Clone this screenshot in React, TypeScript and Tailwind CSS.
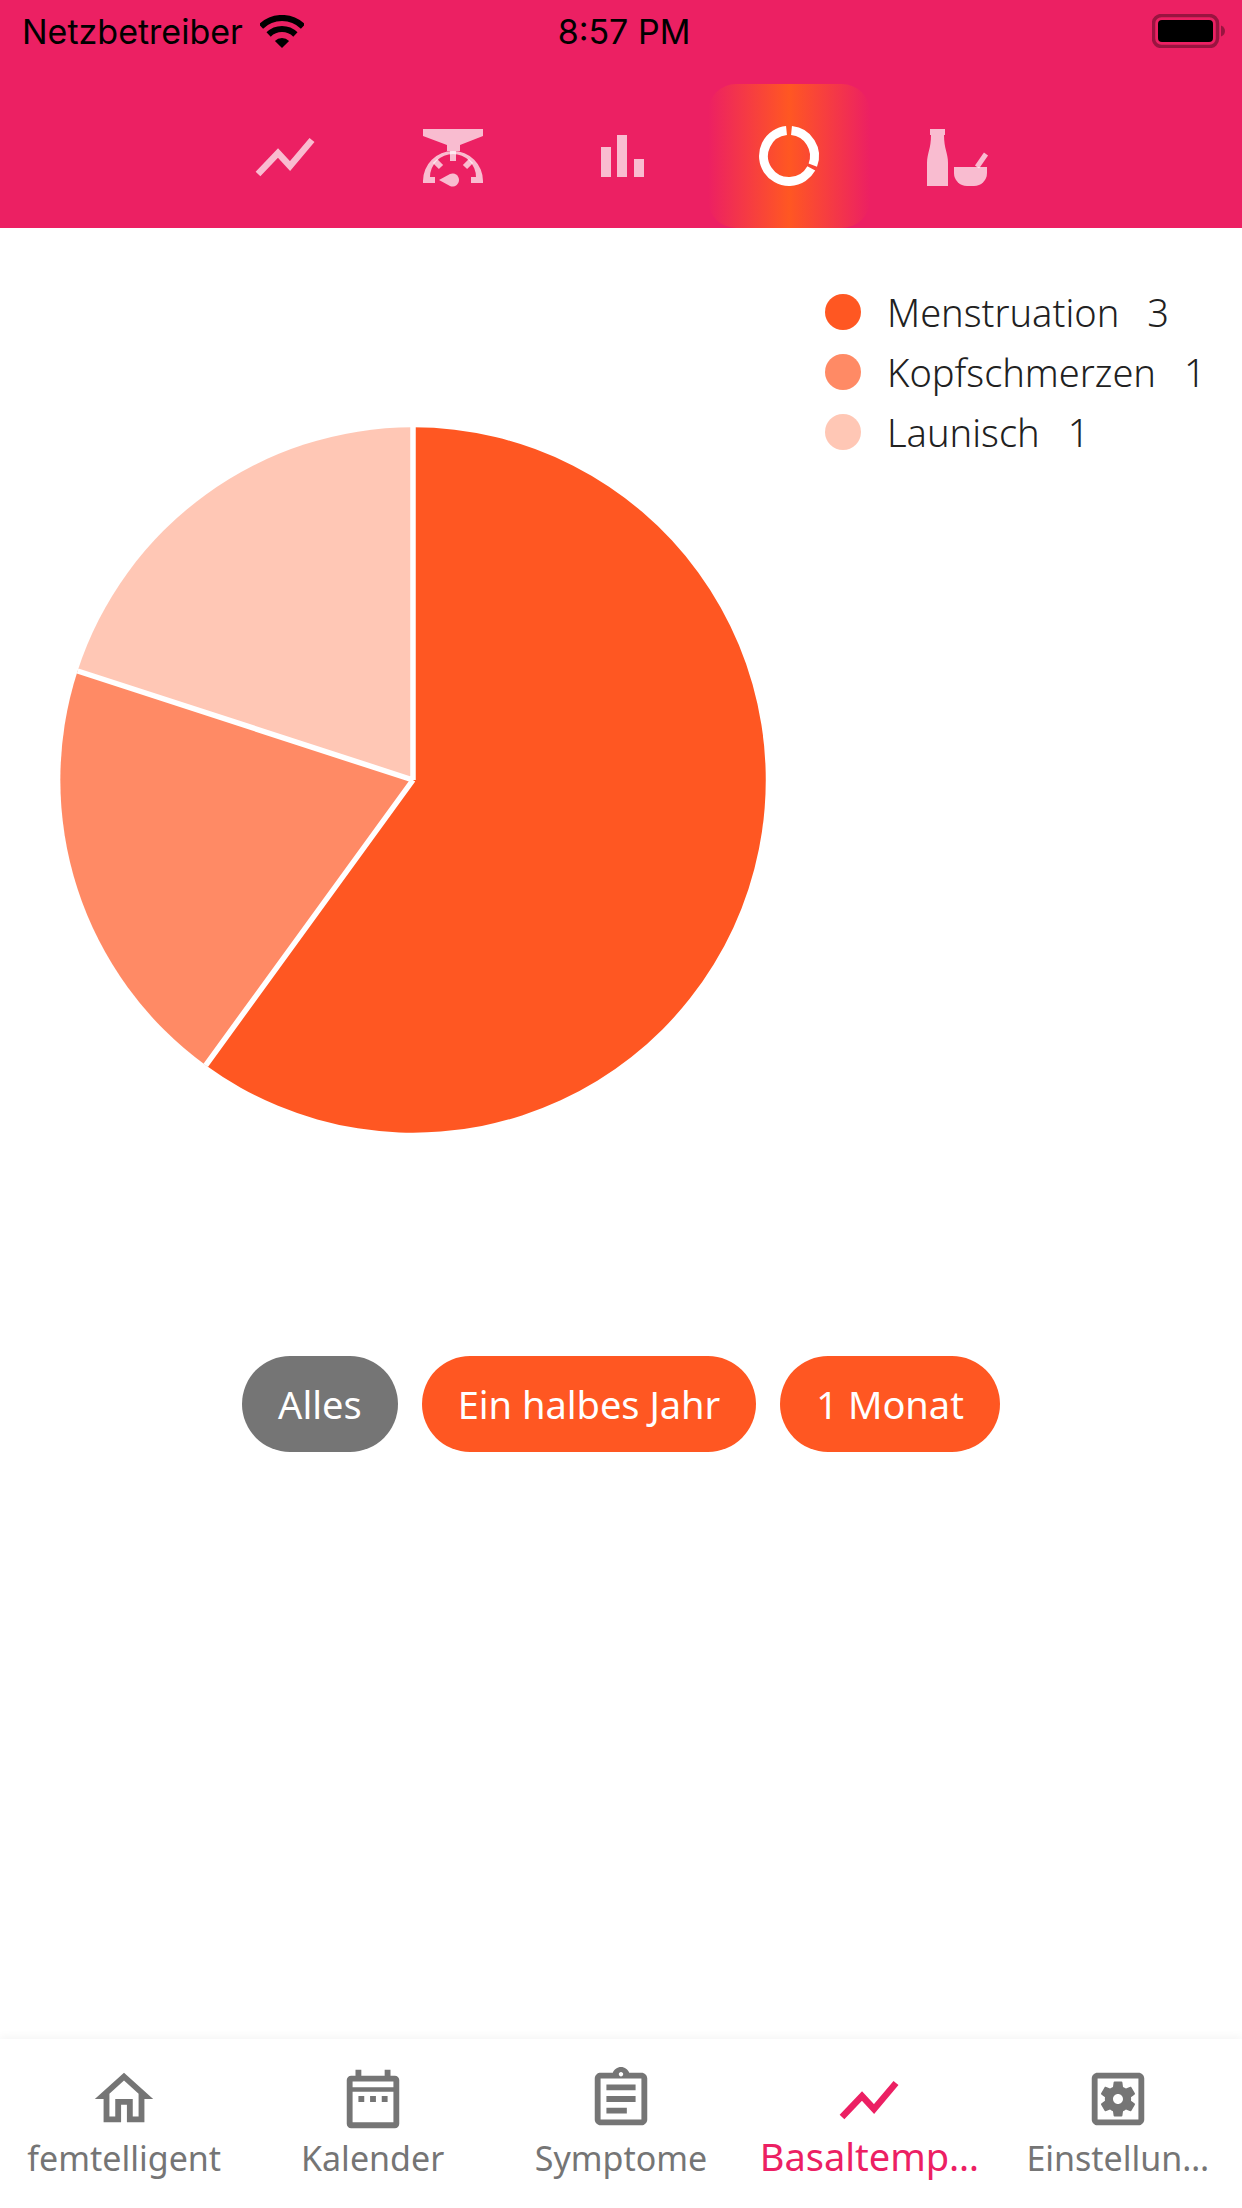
import React from "react";

const UI_FONT = "font-['Noto_Sans',sans-serif]";

const TrendIcon = ({ className }: { className?: string }) => (
  <svg viewBox="0 0 70 70" className={className} fill="none" stroke="currentColor" strokeWidth={6.5}>
    <polyline points="8,53 28,32 40,45 62,19" />
  </svg>
);

const ScaleIcon = ({ className }: { className?: string }) => (
  <svg viewBox="0 0 70 70" className={className} fill="currentColor">
    <path d="M5 8H65V15L42 24V30H29V24L5 15Z" />
    <path d="M5 62V60A30 30 0 0 1 65 60V62H53V56H58A23 23 0 0 0 12 56H17V62Z" />
    <rect x="32" y="30" width="6" height="10" />
    <path d="M17 40L23 46M53 40L47 46" stroke="currentColor" strokeWidth={6} />
    <path d="M21 59L32 53A6.5 6.5 0 1 1 32 65Z" />
  </svg>
);

const BarsIcon = ({ className }: { className?: string }) => (
  <svg viewBox="0 0 70 70" className={className} fill="currentColor">
    <rect x="15" y="26" width="10" height="30" />
    <rect x="31" y="14" width="10" height="42" />
    <rect x="48" y="38" width="10" height="18" />
  </svg>
);

const DonutIcon = ({ className }: { className?: string }) => (
  <svg viewBox="0 0 70 70" className={className} fill="none" stroke="currentColor" strokeWidth={9}>
    <path d="M37.5 9.6A25.5 25.5 0 0 1 58.8 44.1" />
    <path d="M57.3 47.4A25.5 25.5 0 1 1 32.5 9.6" />
  </svg>
);

const BottleIcon = ({ className }: { className?: string }) => (
  <svg viewBox="0 0 70 70" className={className} fill="currentColor">
    <rect x="8" y="8" width="15" height="6" />
    <path d="M9 14H22C22 28 26 32 26 42V65H5V42C5 32 9 28 9 14Z" />
    <path d="M32 46H65V52A13 13 0 0 1 52 65H45A13 13 0 0 1 32 52Z" />
    <path d="M55 46L64 33" stroke="currentColor" strokeWidth={5} />
  </svg>
);

const HomeIcon = () => (
  <svg viewBox="0 0 24 24" className="w-[70px] h-[70px]" fill="currentColor">
    <path d="M12 5.69l5 4.5V18h-2v-6H9v6H7v-7.81l5-4.5M12 3L2 12h3v8h6v-6h2v6h6v-8h3L12 3z" />
  </svg>
);

const CalendarIcon = () => (
  <svg viewBox="0 0 24 24" className="w-[70px] h-[70px]" fill="currentColor">
    <path
      fillRule="evenodd"
      d="M6 2h2v2h8V2h2v2h1.5A1.5 1.5 0 0 1 21 5.5v15a1.5 1.5 0 0 1-1.5 1.5h-15A1.5 1.5 0 0 1 3 20.5v-15A1.5 1.5 0 0 1 4.5 4H6V2zM5 6v2h14V6H5zM5 9.5V20h14V9.5H5z"
    />
    <path d="M7 11h2v2H7zM11 11h2v2h-2zM15 11h2v2h-2z" />
  </svg>
);

const ClipboardIcon = () => (
  <svg viewBox="0 0 24 24" className="w-[70px] h-[70px]" fill="currentColor">
    <path d="M7 15h7v2H7zM7 11h10v2H7zM7 7h10v2H7z" />
    <path d="M19 3h-4.18C14.4 1.84 13.3 1 12 1c-1.3 0-2.4.84-2.82 2H5c-.14 0-.27.01-.4.04-.39.08-.74.28-1.01.55-.18.18-.33.4-.43.64-.1.23-.16.49-.16.77v14c0 .27.06.54.16.78s.25.45.43.64c.27.27.62.47 1.01.55.13.02.26.03.4.03h14c1.1 0 2-.9 2-2V5c0-1.1-.9-2-2-2zm-7-.25c.41 0 .75.34.75.75s-.34.75-.75.75-.75-.34-.75-.75.34-.75.75-.75zM19 19H5V5h14v14z" />
  </svg>
);

const SettingsIcon = () => (
  <svg viewBox="0 0 24 24" className="w-[70px] h-[70px]" fill="currentColor">
    <path
      fillRule="evenodd"
      d="M6.21 13.97l1.2 2.07c.08.13.23.18.37.13l1.49-.6c.31.24.64.44 1.01.59l.22 1.59c.03.14.15.25.3.25h2.4c.15 0 .27-.11.3-.25l.22-1.59c.36-.15.7-.35 1.01-.59l1.49.6c.14.05.29 0 .37-.13l1.2-2.07c.08-.13.04-.29-.07-.39l-1.27-.99c.03-.19.04-.39.04-.58 0-.2-.02-.39-.04-.59l1.27-.99c.11-.09.15-.26.07-.39l-1.2-2.07c-.08-.13-.23-.18-.37-.13l-1.49.6c-.31-.24-.64-.44-1.01-.59l-.22-1.59c-.03-.14-.15-.25-.3-.25h-2.4c-.15 0-.27.11-.3.25l-.22 1.59c-.36.15-.71.34-1.01.58l-1.49-.6c-.14-.05-.29 0-.37.13l-1.2 2.07c-.08.13-.04.29.07.39l1.27.99c-.03.2-.05.39-.05.59 0 .2.02.39.04.59l-1.27.99c-.11.1-.14.26-.06.39zM12 10.29c.94 0 1.71.77 1.71 1.71s-.77 1.71-1.71 1.71-1.71-.77-1.71-1.71.77-1.71 1.71-1.71zM19 3H5c-1.1 0-2 .9-2 2v14c0 1.1.9 2 2 2h14c1.1 0 2-.9 2-2V5c0-1.1-.9-2-2-2zm0 16H5V5h14v14z"
    />
  </svg>
);

function StatusBar() {
  return (
    <div className="grid grid-cols-3 items-center h-[62px] pl-[22px] pr-[16px] text-black font-['Inter',sans-serif] text-[34px]">
      <div className="flex items-center gap-[17px]">
        <span>Netzbetreiber</span>
        <svg viewBox="0 0 44 33" className="w-[44px] h-[33px]" fill="none" stroke="currentColor" strokeWidth={6}>
          <path d="M1 11.5A30 30 0 0 1 43 11.5" />
          <path d="M8.6 19.5A19 19 0 0 1 35.4 19.5" />
          <path d="M22 33L14.9 25.9A10 10 0 0 1 29.1 25.9Z" fill="currentColor" stroke="none" />
        </svg>
      </div>
      <div className="text-center">8:57 PM</div>
      <div className="flex justify-end">
        <svg viewBox="0 0 74 34" className="w-[74px] h-[34px]">
          <rect x="1.5" y="1.5" width="64" height="31" rx="8" fill="none" stroke="#000" strokeOpacity={0.35} strokeWidth={3.5} />
          <rect x="6" y="6" width="55" height="22" rx="4" fill="#000" />
          <path d="M69 11.5C72 12.5 73 15 73 17S72 21.5 69 22.5Z" fill="#000" fillOpacity={0.35} />
        </svg>
      </div>
    </div>
  );
}

function TopTabs() {
  const iconClass = "w-[70px] h-[70px]";
  return (
    <div className="flex justify-center h-[144px] mt-[22px] text-white/70">
      <div className="w-[168px] flex items-center justify-center"><TrendIcon className={iconClass} /></div>
      <div className="w-[168px] flex items-center justify-center"><ScaleIcon className={iconClass} /></div>
      <div className="w-[168px] flex items-center justify-center"><BarsIcon className={iconClass} /></div>
      <div className="w-[168px] flex items-center justify-center">
        <div className="w-[162px] h-[144px] rounded-t-[28px] rounded-b-[28px] flex items-center justify-center text-white bg-[linear-gradient(90deg,#ec2063_0%,#ff5722_50%,#ec2063_100%)]">
          <DonutIcon className={iconClass} />
        </div>
      </div>
      <div className="w-[168px] flex items-center justify-center"><BottleIcon className={iconClass} /></div>
    </div>
  );
}

function PieChart() {
  return (
    <svg viewBox="0 0 706 706" className="w-[706px] h-[706px] shrink-0 mt-[199px] ml-[60px]">
      <path d="M353 353L353 0.3A352.7 352.7 0 1 1 145.7 638.3Z" fill="#ff5722" />
      <path d="M353 353L145.7 638.3A352.7 352.7 0 0 1 17.6 244Z" fill="#ff8a65" />
      <path d="M353 353L17.6 244A352.7 352.7 0 0 1 353 0.3Z" fill="#ffc7b5" />
      <path d="M353 353L353 0M353 353L145.7 638.3M353 353L17.6 244" stroke="#fff" strokeWidth={5.5} fill="none" />
    </svg>
  );
}

const legend = [
  { label: "Menstruation", count: 3, dot: "bg-[#ff5722]" },
  { label: "Kopfschmerzen", count: 1, dot: "bg-[#ff8a65]" },
  { label: "Launisch", count: 1, dot: "bg-[#ffc7b5]" },
];

function Legend() {
  return (
    <div className="flex flex-col mt-[54px] ml-[59px]">
      {legend.map((item) => (
        <div key={item.label} className="flex items-center h-[60px] whitespace-nowrap text-[#212121] text-[38px] font-light">
          <span className={`w-[36px] h-[36px] rounded-full mr-[26px] ${item.dot}`} />
          <span>{item.label}</span>
          <span className="ml-[28px]">{item.count}</span>
        </div>
      ))}
    </div>
  );
}

function RangeButtons() {
  return (
    <div className="flex justify-center gap-[24px] mt-[223px] text-white text-[38px]">
      <div className="h-[96px] px-[36px] rounded-[48px] flex items-center bg-[#757575]">Alles</div>
      <div className="h-[96px] px-[36px] rounded-[48px] flex items-center bg-[#ff5722]">Ein halbes Jahr</div>
      <div className="h-[96px] px-[36px] rounded-[48px] flex items-center bg-[#ff5722]">1 Monat</div>
    </div>
  );
}

function BottomNav() {
  return (
    <div className="flex h-[169px] pt-[25px] bg-white shadow-[0_-3px_8px_rgba(0,0,0,0.04)] text-[#757575] text-[34px] leading-[48px]">
      <div className="flex-1 flex flex-col items-center"><HomeIcon /><span>femtelligent</span></div>
      <div className="flex-1 flex flex-col items-center"><CalendarIcon /><span>Kalender</span></div>
      <div className="flex-1 flex flex-col items-center"><ClipboardIcon /><span>Symptome</span></div>
      <div className="flex-1 flex flex-col items-center text-[#ec2063]">
        <TrendIcon className="w-[70px] h-[70px]" />
        <span className="text-[38px] -mt-[2px]">Basaltemp…</span>
      </div>
      <div className="flex-1 flex flex-col items-center"><SettingsIcon /><span>Einstellun…</span></div>
    </div>
  );
}

export default function App() {
  return (
    <div className={`w-[1242px] h-[2208px] flex flex-col bg-white overflow-hidden ${UI_FONT}`}>
      <header className="h-[228px] bg-[#ec2063]">
        <StatusBar />
        <TopTabs />
      </header>
      <main className="flex-1">
        <div className="flex items-start">
          <PieChart />
          <Legend />
        </div>
        <RangeButtons />
      </main>
      <BottomNav />
    </div>
  );
}
